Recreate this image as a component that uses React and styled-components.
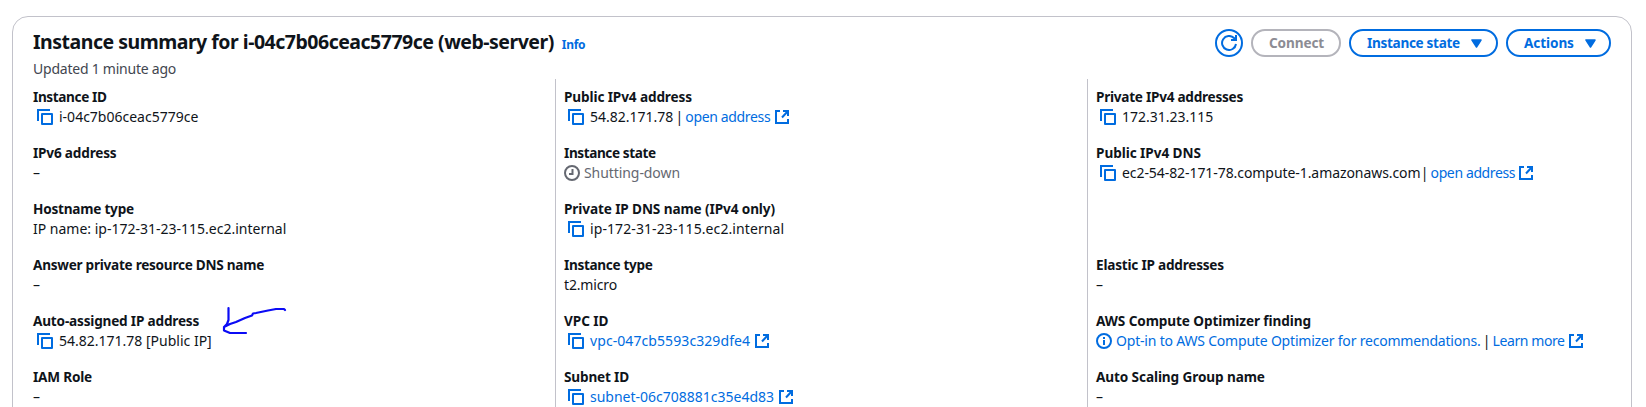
import React from "react";
import styled, { createGlobalStyle } from "styled-components";

const GlobalStyle = createGlobalStyle`
  * { box-sizing: border-box; }
  html, body { margin: 0; padding: 0; background: #fff; overflow: hidden; }
  body {
    font-family: "Noto Sans", "Open Sans", sans-serif;
    font-size: 14px;
    line-height: 20px;
    color: #0f141a;
  }
`;

const Page = styled.main`
  height: 100vh;
  overflow: hidden;
  padding: 16px 14px 0 12px;
`;

const Card = styled.section`
  position: relative;
  height: 440px;
  border: 1px solid #c2c2ca;
  border-radius: 16px;
  padding: 12px 20px 0;
`;

const Header = styled.header`
  display: flex;
  justify-content: space-between;
  align-items: flex-start;
  height: 30px;
`;

const Tracked = styled.span`
  letter-spacing: ${(p) => p.$ls || 0}px;
  white-space: pre;
`;

const Heading = styled.div`
  display: flex;
  align-items: baseline;
  gap: 8px;
  padding-top: 1px;
`;

const Title = styled.h2`
  margin: 0;
  font-size: 19.500px;
  line-height: 24px;
  font-weight: 700;
  letter-spacing: -0.495px;
  white-space: nowrap;
`;

const InfoLink = styled.a`
  font-size: 12px;
  font-weight: 700;
  letter-spacing: -0.28px;
  color: #006ce0;
`;

const Updated = styled.div`
  height: 20px;
  color: #424650;
  letter-spacing: -0.23px;
`;

const Toolbar = styled.div`
  display: flex;
  gap: 8px;
`;

const Button = styled.button`
  display: flex;
  align-items: center;
  justify-content: ${(p) => (p.$round ? "center" : "flex-start")};
  gap: 11px;
  height: 28px;
  width: ${(p) => p.$width}px;
  padding: 0 0 0 ${(p) => (p.$round ? 0 : 16)}px;
  border: 2px solid currentColor;
  border-color: ${(p) => (p.$muted ? "#b4b4bb" : "#006ce0")};
  border-radius: 20px;
  background: #fff;
  color: ${(p) => (p.$muted ? "#8c8c94" : "#006ce0")};
  font: 700 13.600px/20px "Noto Sans", sans-serif;
  white-space: nowrap;
`;

const Columns = styled.div`
  display: grid;
  grid-template-columns: 522px 532px 1fr;
`;

const Column = styled.div`
  display: flex;
  flex-direction: column;
  gap: 16px;
  height: 360px;
  padding: 8px 0 0 ${(p) => (p.$divided ? 8 : 0)}px;
  border-left: ${(p) => (p.$divided ? "1px solid #c2c2ca" : "0")};
`;

const Field = styled.div`
  height: 40px;
`;

const Label = styled.div`
  height: 20px;
  font-size: 13.600px;
  font-weight: 700;
`;

const Value = styled.div`
  display: flex;
  align-items: center;
  height: 20px;
  color: ${(p) => (p.$muted ? "#656871" : "inherit")};
`;

const Link = styled.a`
  color: #006ce0;
  letter-spacing: ${(p) => p.$ls || 0}px;
  white-space: pre;
`;

const Bar = styled.span`
  margin: 0 ${(p) => p.$right}px 0 ${(p) => p.$left}px;
  width: 8px;
  text-align: center;
`;

const Glyph = styled.svg`
  flex: none;
  display: block;
  fill: none;
  stroke: currentColor;
  stroke-width: 2;
  color: ${(p) => p.$color || "#006ce0"};
  margin: 0 ${(p) => p.$right || 0}px 0 ${(p) => p.$left || 0}px;
`;

const Scribble = styled.svg`
  position: absolute;
  left: 207px;
  top: 287px;
  fill: none;
  stroke: #0b0bf5;
  stroke-width: 2.2;
  stroke-linecap: round;
  stroke-linejoin: round;
`;

const CopyIcon = () => (
  <Glyph width="16" height="16" viewBox="0 0 16 16" $left={4} $right={6}>
    <path d="M1 12V1h12" />
    <path d="M5 5h10v10H5z" strokeLinejoin="round" />
  </Glyph>
);

const ExternalIcon = ({ left = 5 }) => (
  <Glyph width="14" height="14" viewBox="0 0 14 14" $left={left}>
    <path d="M5 1H1v12h12V9" />
    <path d="M8 1h5v5M13 1 7 7.500" />
  </Glyph>
);

const ClockIcon = () => (
  <Glyph width="16" height="16" viewBox="0 0 16 16" $color="#656871" $right={4}>
    <circle cx="8" cy="8" r="7" />
    <path d="M8.500 4v5H5" />
  </Glyph>
);

const InfoIcon = () => (
  <Glyph width="16" height="16" viewBox="0 0 16 16" $right={4}>
    <circle cx="8" cy="8" r="7" />
    <path d="M8 7v5M8 4v2" />
  </Glyph>
);

const RefreshIcon = () => (
  <Glyph width="16" height="16" viewBox="0 0 16 16">
    <path d="M15 9A7 7 0 1 1 13 3l1.500 2" />
    <path d="M15 0v5h-5" />
  </Glyph>
);

const Caret = () => (
  <Glyph width="11" height="9" viewBox="0 0 11 9">
    <path d="M1 1h9L5.500 8z" fill="currentColor" strokeWidth="1.500" strokeLinejoin="round" />
  </Glyph>
);

const Item = ({ label, ls, muted, children }) => (
  <Field>
    <Label>
      <Tracked $ls={ls}>{label}</Tracked>
    </Label>
    <Value $muted={muted}>{children}</Value>
  </Field>
);

export default function App() {
  return (
    <Page>
      <GlobalStyle />
      <Card>
        <Header>
          <Heading>
            <Title>Instance summary for i-04c7b06ceac5779ce (web-server)</Title>
            <InfoLink>Info</InfoLink>
          </Heading>
          <Toolbar>
            <Button $round $width={28} aria-label="Refresh"><RefreshIcon /></Button>
            <Button $muted $width={90}><Tracked $ls={-0.12}>Connect</Tracked></Button>
            <Button $width={149}><Tracked $ls={-0.32}>Instance state</Tracked><Caret /></Button>
            <Button $width={105}><Tracked $ls={-0.1}>Actions</Tracked><Caret /></Button>
          </Toolbar>
        </Header>
        <Updated>Updated 1 minute ago</Updated>
        <Columns>
          <Column>
            <Item label="Instance ID" ls={-0.38}><CopyIcon />i-04c7b06ceac5779ce</Item>
            <Item label="IPv6 address" ls={-0.187}>–</Item>
            <Item label="Hostname type" ls={-0.23}>IP name: ip-172-31-23-115.ec2.internal</Item>
            <Item label="Answer private resource DNS name" ls={-0.265}>–</Item>
            <Item label="Auto-assigned IP address" ls={-0.19}><CopyIcon />54.82.171.78 [Public IP]</Item>
            <Item label="IAM Role" ls={-0.21}>–</Item>
          </Column>
          <Column $divided>
            <Item label="Public IPv4 address" ls={-0.12}>
              <CopyIcon />54.82.171.78<Bar $left={2} $right={2}>|</Bar>
              <Link $ls={-0.35}>open address</Link><ExternalIcon />
            </Item>
            <Item label="Instance state" ls={-0.41} muted>
              <ClockIcon /><Tracked $ls={-0.072}>Shutting-down</Tracked>
            </Item>
            <Item label="Private IP DNS name (IPv4 only)" ls={-0.11}>
              <CopyIcon /><Tracked $ls={0.09}>ip-172-31-23-115.ec2.internal</Tracked>
            </Item>
            <Item label="Instance type" ls={-0.34}><Tracked $ls={-0.152}>t2.micro</Tracked></Item>
            <Item label="VPC ID" ls={-0.05}>
              <CopyIcon /><Link $ls={0.08}>vpc-047cb5593c329dfe4</Link><ExternalIcon />
            </Item>
            <Item label="Subnet ID" ls={-0.17}>
              <CopyIcon /><Link>subnet-06c708881c35e4d83</Link><ExternalIcon />
            </Item>
          </Column>
          <Column $divided>
            <Item label="Private IPv4 addresses" ls={-0.26}><CopyIcon />172.31.23.115</Item>
            <Item label="Public IPv4 DNS" ls={-0.06}>
              <CopyIcon /><Tracked $ls={-0.07}>ec2-54-82-171-78.compute-1.amazonaws.com</Tracked>
              <Bar $left={0} $right={2}>|</Bar>
              <Link $ls={-0.38}>open address</Link><ExternalIcon left={4} />
            </Item>
            <Field />
            <Item label="Elastic IP addresses" ls={-0.22}>–</Item>
            <Item label="AWS Compute Optimizer finding" ls={-0.1}>
              <InfoIcon /><Link $ls={-0.195}>Opt-in to AWS Compute Optimizer for recommendations.</Link>
              <Bar $left={2} $right={2}>|</Bar>
              <Link $ls={-0.42}>Learn more</Link><ExternalIcon left={4} />
            </Item>
            <Item label="Auto Scaling Group name" ls={-0.11}>–</Item>
          </Column>
        </Columns>
        <Scribble width="70" height="36" viewBox="0 0 70 36">
          <path d="M8.500 4v12l-1.500 4-3 3v3.500l6 2.500h16M4 23l6-3 6-2 9-4 7-2.500 1-2 3-.5 12-2.500 8-1.500h8l1 1" />
        </Scribble>
      </Card>
    </Page>
  );
}
